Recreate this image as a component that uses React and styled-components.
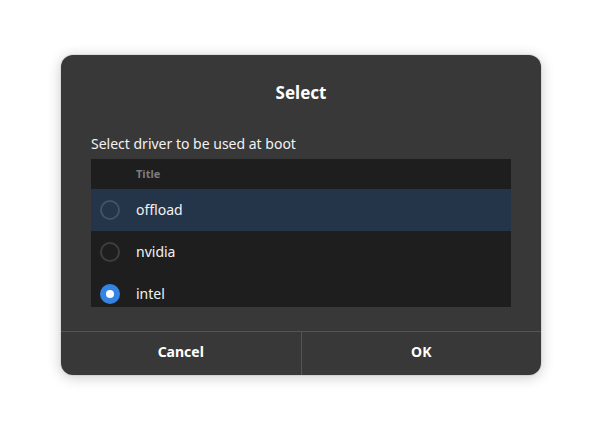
import React, { Component } from 'react'
import styled, { createGlobalStyle } from 'styled-components';

const Global = createGlobalStyle`
    html, body {
        margin: 0;
        padding: 0;
        background: #ffffff;
        font-family: "Noto Sans", "Open Sans", sans-serif;
    }
`
const Page = styled.div`
    width: 602px;
    height: 442px;
    display: flex;
    justify-content: center;
    padding-top: 55px;
    box-sizing: border-box;
`
const Dialog = styled.div`
    width: 480px;
    height: 320px;
    background: #383838;
    border-radius: 12px;
    box-shadow: 0 2px 14px rgba(0, 0, 0, 0.22), 0 0 0 1px rgba(0, 0, 0, 0.06);
    display: flex;
    flex-direction: column;
    overflow: hidden;
    color: #ffffff;
`
const Content = styled.div`
    flex: 1;
    padding: 25px 30px 24px 30px;
    display: flex;
    flex-direction: column;
`
const Heading = styled.div`
    font-size: 17px;
    font-weight: 700;
    text-align: center;
    line-height: 26px;
`
const Label = styled.div`
    font-size: 14px;
    line-height: 20px;
    margin-top: 28px;
    margin-bottom: 5px;
    color: #f2f2f2;
`
const List = styled.div`
    background: #1e1e1e;
    height: 148px;
    overflow: hidden;
`
const Header = styled.div`
    height: 30px;
    display: flex;
    align-items: center;
    padding-left: 45px;
    padding-bottom: 2px;
    box-sizing: border-box;
    font-size: 11px;
    font-weight: 700;
    color: #7c7c7c;
`
const Row = styled.div`
    height: 42px;
    display: flex;
    align-items: center;
    gap: 16px;
    padding-left: 9px;
    background: ${p => (p.selected ? '#243449' : 'transparent')};
    font-size: 14px;
    color: #f2f2f2;
`
const Name = styled.span`
    margin-top: -2px;
`
const Radio = styled.div`
    width: 20px;
    height: 20px;
    border-radius: 50%;
    box-sizing: border-box;
    border: ${p => (p.checked ? 'none' : `2px solid ${p.dim ? '#46505e' : '#3e3e3e'}`)};
    background: ${p => (p.checked ? '#3584e4' : 'transparent')};
    display: flex;
    align-items: center;
    justify-content: center;
    &::after {
        content: '';
        display: ${p => (p.checked ? 'block' : 'none')};
        width: 8px;
        height: 8px;
        border-radius: 50%;
        background: #ffffff;
    }
`
const Buttons = styled.div`
    height: 44px;
    display: flex;
    border-top: 1px solid #545454;
`
const Action = styled.button`
    flex: 1;
    border: none;
    background: transparent;
    color: #ffffff;
    font-family: inherit;
    font-size: 14px;
    font-weight: 700;
    padding: 0 0 4px 0;
    & + & {
        border-left: 1px solid #545454;
    }
`

const drivers = [
    { name: 'offload', selected: true },
    { name: 'nvidia' },
    { name: 'intel', checked: true },
]

class App extends Component {
    render() {
        return (
            <Page>
                <Global />
                <Dialog>
                    <Content>
                        <Heading>Select</Heading>
                        <Label>Select driver to be used at boot</Label>
                        <List>
                            <Header>Title</Header>
                            {drivers.map(d => (
                                <Row key={d.name} selected={d.selected}>
                                    <Radio checked={d.checked} dim={d.selected} />
                                    <Name>{d.name}</Name>
                                </Row>
                            ))}
                        </List>
                    </Content>
                    <Buttons>
                        <Action>Cancel</Action>
                        <Action>OK</Action>
                    </Buttons>
                </Dialog>
            </Page>
        );
    }
}

export default App;
